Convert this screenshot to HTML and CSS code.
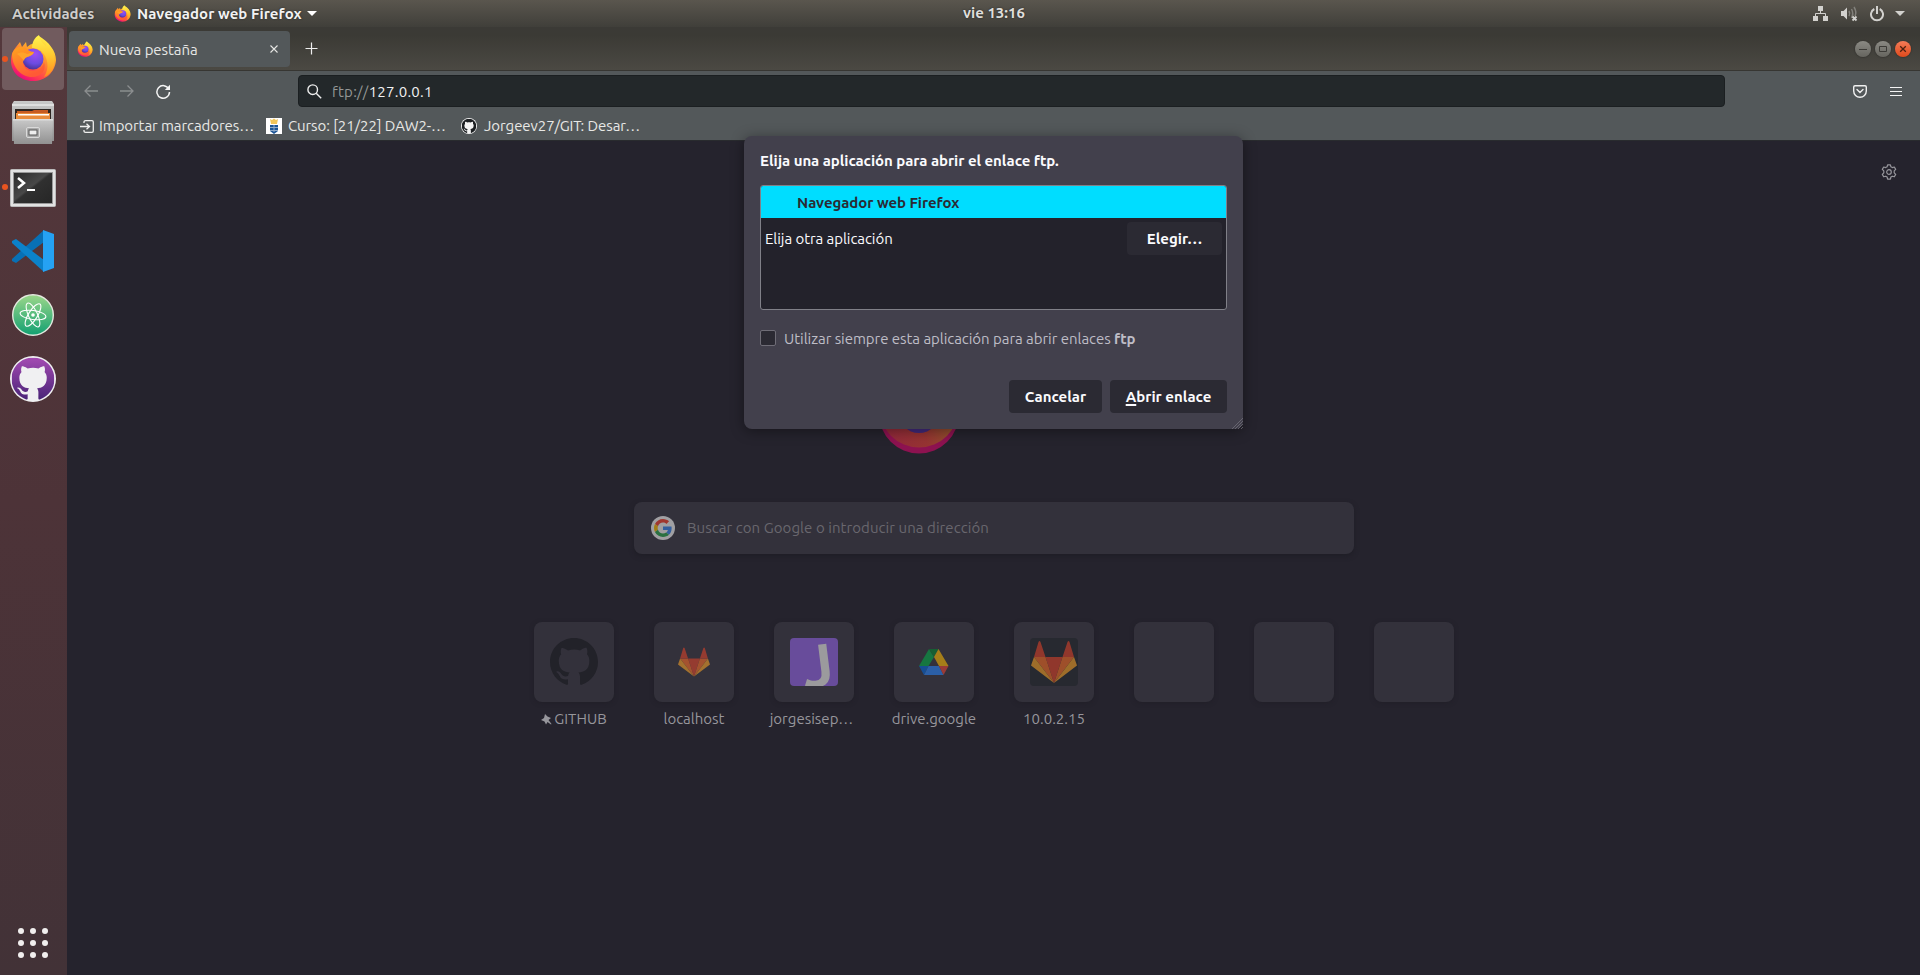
FILE: index.html
```html
<!DOCTYPE html>
<html lang="es">
<head>
<meta charset="utf-8">
<title>Nueva pestaña</title>
<link rel="stylesheet" href="styles.css">
</head>
<body>
<svg class="defs" width="0" height="0" aria-hidden="true">
  <defs>
    <linearGradient id="ffBody" x1=".85" y1=".1" x2=".3" y2="1"><stop offset="0" stop-color="#fff34a"/><stop offset=".28" stop-color="#ffb428"/><stop offset=".55" stop-color="#ff7139"/><stop offset=".8" stop-color="#ff3b50"/><stop offset="1" stop-color="#e9087e"/></linearGradient>
    <linearGradient id="ffTail" x1=".6" y1="0" x2=".6" y2="1"><stop offset="0" stop-color="#fff44f"/><stop offset=".5" stop-color="#ffc830"/><stop offset="1" stop-color="#ff8a1e"/></linearGradient>
    <linearGradient id="ffHead" x1="0" y1="0" x2=".4" y2="1"><stop offset="0" stop-color="#ffa51e"/><stop offset="1" stop-color="#ff5a36"/></linearGradient>
    <radialGradient id="ffGlobe" cx=".6" cy=".25" r=".8"><stop offset="0" stop-color="#a04df5"/><stop offset=".6" stop-color="#6b4be0"/><stop offset="1" stop-color="#45308f"/></radialGradient>
    <linearGradient id="ffDim" x1="0" y1=".8" x2="1" y2=".6"><stop offset="0" stop-color="#92283c"/><stop offset=".55" stop-color="#963432"/><stop offset="1" stop-color="#8f5a2a"/></linearGradient>
    <linearGradient id="metal" x1="0" y1="0" x2="0" y2="1"><stop offset="0" stop-color="#c9c9c9"/><stop offset="1" stop-color="#919191"/></linearGradient>
    <linearGradient id="screen" x1="0" y1="0" x2="1" y2="1"><stop offset="0" stop-color="#2a2a2a"/><stop offset=".45" stop-color="#484848"/><stop offset=".5" stop-color="#303030"/><stop offset="1" stop-color="#262626"/></linearGradient>
    <linearGradient id="atomBg" x1="0" y1="0" x2="0" y2="1"><stop offset="0" stop-color="#9bd78a"/><stop offset="1" stop-color="#12a071"/></linearGradient>
    <linearGradient id="ghBg" x1="0" y1="0" x2="0" y2="1"><stop offset="0" stop-color="#a44bb3"/><stop offset="1" stop-color="#4a2478"/></linearGradient>
    <symbol id="firefox" viewBox="0 0 46 48">
      <path fill="url(#ffBody)" d="M6 13 10 8l2 5 4-5 1 5c3-3 6-4 9-3L29 2c10 6 17 15 17 24C45 39 35 47 23 47 10 47 1 38 1 27 1 20 3 17 6 13z"/>
      <path fill="url(#ffTail)" d="M22 14c0-6 3-11 7-13 1 5 3 8 7 11l1-3c5 6 9 13 7 22-1 6-5 10-10 12 6-9 4-20-3-26-3-2-6-3-9-3z"/>
      <circle cx="23" cy="25" r="10.500" fill="url(#ffGlobe)"/>
      <path fill="url(#ffHead)" d="M2 20c2-5 5-7 8-7 4 0 6 1 8 3 2 1 4 2 6 2-1 3-4 4-7 5-3 1-4 3-4 6 1 5 5 8 10 8 6 0 10-4 11-9 3 8-3 15-12 15C11 43 2 33 2 20z"/>
      <path fill="#ffa329" d="M7 20c3-2 7-2 10 0l7-2c-1 3-4 4-7 5-2 1-3 2-3 4-2-3-4-5-7-7z"/>
    </symbol>
    <symbol id="github" viewBox="0 0 16 16"><path d="M8 0C3.580 0 0 3.580 0 8c0 3.540 2.290 6.530 5.470 7.590.4.070.55-.17.55-.38 0-.19-.01-.82-.01-1.490-2.010.37-2.530-.49-2.690-.94-.09-.23-.48-.94-.82-1.130-.28-.15-.68-.52-.01-.53.63-.01 1.080.58 1.230.82.72 1.210 1.870.87 2.330.66.070-.52.28-.87.51-1.070-1.780-.2-3.640-.89-3.640-3.950 0-.87.31-1.590.82-2.150-.08-.2-.36-1.020.080-2.120 0 0 .67-.21 2.200.82.64-.18 1.320-.27 2-.27.68 0 1.360.090 2 .27 1.530-1.040 2.200-.82 2.200-.82.44 1.100.16 1.920.080 2.120.51.56.82 1.270.82 2.150 0 3.070-1.870 3.750-3.650 3.950.29.25.54.73.54 1.480 0 1.070-.01 1.930-.01 2.200 0 .21.15.46.55.38A8.013 8.013 0 0 0 16 8c0-4.420-3.580-8-8-8z"/></symbol>
    <symbol id="gitlab" viewBox="0 0 46 42">
      <path fill="#e24329" d="M23 42 31.500 16h-17z"/>
      <path fill="#fc6d26" d="M23 42 14.500 16H3zM23 42l8.500-26H43z"/>
      <path fill="#fca326" d="M3 16 0 24.500 23 42zM43 16l3 8.500L23 42z"/>
      <path fill="#e24329" d="M3 16h11.500L9.500 1q-1-2-2 0zM43 16H31.500l5-15q1-2 2 0z"/>
    </symbol>
  </defs>
</svg>

<header class="topbar">
  <span class="activities">Actividades</span>
  <div class="appmenu">
    <svg width="17" height="17"><use href="#firefox"/></svg>
    <span class="appname">Navegador web Firefox</span>
    <svg class="caret" width="10" height="5"><path d="M0 0h10L5 5z" fill="#fff"/></svg>
  </div>
  <span class="clock">vie 13:16</span>
  <div class="tray">
    <svg width="15" height="15" fill="#d2d1ce"><path d="M5 0h5v5H5zM0 10h5v5H0zM10 10h5v5h-5z"/><path d="M7.500 5v3M2.500 10V7.500h10V10" fill="none" stroke="#d2d1ce"/></svg>
    <svg width="17" height="16" fill="#d2d1ce"><path d="M0 5h2.500L6 1.500v12L2.500 10H0z"/><path d="M8 5q1.500 2.500 0 5M10.500 3q2.500 4.500 0 9M13 1q3 5 1 9" fill="none" stroke="#82807b" stroke-width="1.500"/><path d="m11.500 10.500 4 4m0-4-4 4" stroke="#d2d1ce" stroke-width="1.800"/></svg>
    <svg width="14" height="16" fill="none" stroke="#d2d1ce" stroke-width="2"><path d="M4.300 3a6 6 0 1 0 5.400 0M7 0v8"/></svg>
    <svg width="10" height="5"><path d="M0 0h10L5 5z" fill="#d2d1ce"/></svg>
  </div>
</header>

<div class="desktop">
  <nav class="dock">
    <div class="dock-item active running"><svg width="46" height="48"><use href="#firefox"/></svg></div>
    <div class="dock-item">
      <svg width="42" height="44" viewBox="0 0 42 44"><path d="M0 3 2 0h38l2 3v37H0z" fill="url(#metal)"/><path d="M0 3h42v2H0z" fill="#dedede"/><path d="M3 8h36v11H3z" fill="#2c2521"/><path d="M5 10h15l2-1h14v3H5z" fill="#c75b21"/><path d="M4 12h34v6H4z" fill="#e98b3a"/><path d="M6 13h31v1.500H6z" fill="#fff"/><path d="M1 18h40l-1 25H2z" fill="url(#metal)"/><path d="M1 18h40v1.500H1z" fill="#dcdcdc"/><rect x="14.500" y="26.500" width="13" height="10" rx="1.500" fill="#aaa" stroke="#dadada"/><rect x="17" y="29" width="8" height="5" fill="#eee" stroke="#555"/></svg>
    </div>
    <div class="dock-item running">
      <svg class="term" width="46" height="38" viewBox="0 0 46 38"><rect x=".5" y=".5" width="45" height="37" rx="1" fill="#e2e2e2" stroke="#bbb"/><path d="M3 3h40v32H3z" fill="#999"/><path d="M4 4h38v30H4z" fill="url(#screen)"/><path d="m8 9 6 5-6 5" fill="none" stroke="#fff" stroke-width="2.500"/><path d="M17 20h8v2h-8z" fill="#fff"/></svg>
    </div>
    <div class="dock-item">
      <svg width="42" height="42" viewBox="0 0 42 42"><path fill="#0870b5" d="M0 29v2l4 2L32 12V0z"/><path fill="#0b82ca" d="M0 13v-2l4-2 28 21v12z"/><path fill="#25a2f3" d="m31 0 11 4v34l-11 4z"/></svg>
    </div>
    <div class="dock-item">
      <svg width="42" height="42" viewBox="0 0 42 42"><circle cx="21" cy="21" r="20.300" fill="url(#atomBg)" stroke="#e4e8df" stroke-width="1.400"/><g fill="none" stroke="#fff" stroke-width="1.100"><ellipse cx="21" cy="21" rx="13" ry="4.500" transform="rotate(8 21 21)"/><ellipse cx="21" cy="21" rx="13" ry="4.500" transform="rotate(65 21 21)"/><ellipse cx="21" cy="21" rx="13" ry="4.500" transform="rotate(122 21 21)"/></g><circle cx="21" cy="21" r="1.800" fill="#fff"/></svg>
    </div>
    <div class="dock-item">
      <svg width="46" height="46" viewBox="0 0 46 46"><circle cx="23" cy="23" r="23" fill="#f0f0f2"/><svg x="1.500" y="1.500" width="43" height="43" fill="url(#ghBg)"><use href="#github"/></svg></svg>
    </div>
    <svg class="apps" width="30" height="30" fill="#f1efee"><circle cx="3" cy="3" r="3"/><circle cx="15" cy="3" r="3"/><circle cx="27" cy="3" r="3"/><circle cx="3" cy="15" r="3"/><circle cx="15" cy="15" r="3"/><circle cx="27" cy="15" r="3"/><circle cx="3" cy="27" r="3"/><circle cx="15" cy="27" r="3"/><circle cx="27" cy="27" r="3"/></svg>
  </nav>

  <main class="browser">
    <div class="tabs">
      <div class="tab">
        <svg width="16" height="16"><use href="#firefox"/></svg>
        <span class="tab-title">Nueva pestaña</span>
        <svg class="tab-close" width="8" height="8" stroke="#e6e6e4" stroke-width="1.100"><path d="m.5.5 7 7m0-7-7 7"/></svg>
      </div>
      <svg class="newtab" width="13" height="13" stroke="#eee" stroke-width="1.200"><path d="M6.500.5v12M.5 6.500h12"/></svg>
      <div class="winbtns">
        <span class="wb"><svg width="16" height="16" stroke="#3c3b37"><path d="M4 8.500h8"/></svg></span>
        <span class="wb"><svg width="16" height="16" fill="none" stroke="#3c3b37"><path d="M4.500 5.500h7v5h-7z"/></svg></span>
        <span class="wb close"><svg width="16" height="16" stroke="#4c2010" stroke-width="1.300"><path d="m5.200 5.200 5.600 5.600m0-5.600-5.600 5.600"/></svg></span>
      </div>
    </div>

    <div class="toolbar">
      <svg width="14" height="12" class="nav-off"><path d="M14 6H1M6.500.5 1 6l5.500 5.500"/></svg>
      <svg width="14" height="12" class="nav-off"><path d="M0 6h13M7.500.5 13 6l-5.500 5.500"/></svg>
      <svg width="15" height="15" fill="none" stroke="#f4f4f4" stroke-width="1.500"><path d="M12.800 5A6.300 6.300 0 1 0 13.500 8"/><path d="M14 .8V6H8.800z" fill="#f4f4f4" stroke="none"/></svg>
      <div class="urlbar">
        <svg width="15" height="15" fill="none" stroke="#eee" stroke-width="1.400"><circle cx="5.700" cy="5.700" r="4.800"/><path d="m9.200 9.200 5 5"/></svg>
        <span class="url"><span class="scheme">ftp://</span>127.0.0.1</span>
      </div>
      <svg class="pocket" width="14" height="13" fill="none" stroke="#f0f0f0" stroke-width="1.400"><path d="M2 .7h10q1.300 0 1.300 1.300v4a6.300 6.300 0 0 1-12.600 0V2Q.7.700 2 .7z"/><path d="M4 4.500 7 7.500l3-3" stroke-linecap="round"/></svg>
      <svg class="menu" width="12" height="11" stroke="#f4f4f4"><path d="M0 1.500h12M0 5.500h12M0 9.500h12"/></svg>
    </div>

    <div class="bookmarks">
      <div class="bm"><svg width="14" height="13" fill="none" stroke="#eee" stroke-width="1.300"><path d="M4 3V2Q4 .7 5.500.7h6.500q1.300 0 1.300 1.300v9q0 1.300-1.300 1.300H5.500Q4 12.300 4 11v-1M0 6.500h9M6.500 3.800l3 2.700-3 2.700"/></svg><span>Importar marcadores…</span></div>
      <div class="bm"><svg width="16" height="16"><path fill="#fff" d="M0 0h16v16H0z"/><path fill="#f2c65a" d="m4 1 2 1 2-1.500L10 2l2-1-1 5H5z"/><path fill="#1c5596" d="M4 7h8v6l-4 3-4-3z"/><path stroke="#fff" d="M4 9.500h8M4 12.500h8M8 7v7" opacity=".5"/></svg><span>Curso: [21/22] DAW2-…</span></div>
      <div class="bm"><svg width="16" height="16" viewBox="0 0 16 16"><circle cx="8" cy="8" r="8" fill="#f4f4f4"/><svg x=".7" y=".7" width="14.600" height="14.600" fill="#1c1f22"><use href="#github"/></svg></svg><span>Jorgeev27/GIT: Desar…</span></div>
    </div>

    <section class="page">
      <svg class="gear" width="16" height="16" viewBox="0 0 16 16" fill="none" stroke="#97969c" stroke-width="1.200"><path d="M6.600.8h2.800l.5 2 1.400.8 2-.6 1.400 2.400-1.500 1.500v1.900l1.500 1.600-1.400 2.400-2-.6-1.400.8-.5 2.200H6.600l-.5-2.200-1.400-.8-2 .6-1.400-2.400 1.500-1.600V6.900L1.300 5.400 2.700 3l2 .6 1.400-.8z" stroke-linejoin="round"/><circle cx="8" cy="8" r="2.300"/></svg>
      <svg class="logo" width="80" height="83" viewBox="0 0 80 83"><circle cx="40" cy="42.500" r="40" fill="#8d1250"/><circle cx="40" cy="37" r="39.500" fill="url(#ffDim)"/><circle cx="40" cy="41" r="21" fill="#41297b"/></svg>
      <div class="search">
        <svg width="24" height="24" viewBox="0 0 24 24"><circle cx="12" cy="12" r="12" fill="#a09fa2"/><svg x="3" y="3" width="18" height="18" viewBox="0 0 48 48"><path fill="#a0372f" d="M24 9.500c3.540 0 6.710 1.220 9.210 3.600l6.850-6.850C35.900 2.380 30.470 0 24 0 14.620 0 6.510 5.380 2.560 13.220l7.980 6.190C12.430 13.720 17.740 9.500 24 9.500z"/><path fill="#335f9f" d="M46.980 24.550c0-1.570-.15-3.090-.38-4.550H24v9.020h12.940c-.58 2.960-2.260 5.480-4.780 7.180l7.730 6c4.510-4.180 7.090-10.360 7.090-17.650z"/><path fill="#a37c13" d="M10.530 28.590c-.48-1.450-.76-2.990-.76-4.590s.27-3.140.76-4.590l-7.980-6.190C.92 16.460 0 20.120 0 24c0 3.880.92 7.540 2.560 10.780l7.970-6.190z"/><path fill="#2a7040" d="M24 48c6.480 0 11.930-2.130 15.890-5.810l-7.730-6c-2.150 1.450-4.920 2.300-8.160 2.300-6.260 0-11.570-4.220-13.470-9.910l-7.980 6.190C6.510 42.620 14.620 48 24 48z"/></svg></svg>
        <span>Buscar con Google o introducir una dirección</span>
      </div>
      <div class="tiles">
        <div class="site"><div class="tile"><svg width="48" height="48" fill="#222229"><use href="#github"/></svg></div><div class="label"><svg width="11" height="11" viewBox="0 0 11 11" fill="#97969c"><path d="m4 0 2.500 2.500L10 4 7.500 6 10.500 10l-.5.500L6.500 8 5 10.500 3.500 7.500 0 6l3-2z"/></svg><span>GITHUB</span></div></div>
        <div class="site"><div class="tile"><svg class="dim" width="32" height="30"><use href="#gitlab"/></svg></div><div class="label"><span>localhost</span></div></div>
        <div class="site"><div class="tile"><svg class="jot" width="48" height="48"><text x="12" y="49" transform="rotate(-7 24 28)">J</text></svg></div><div class="label wide"><span>jorgesisep…</span></div></div>
        <div class="site"><div class="tile"><svg class="dim" width="30" height="26" viewBox="0 0 30 26"><path fill="#00ac47" d="M10 0 0 17h9.500L15 8z"/><path fill="#00832d" d="M10 0h9.500L15 8z"/><path fill="#ffba00" d="m19.500 0 10 17H20L15 8z"/><path fill="#0066da" d="M0 17h9.500L5 26z"/><path fill="#2684fc" d="M9.500 17H20l4.500 9H5z"/><path fill="#ea4335" d="M20 17h9.500l-5 9z"/></svg></div><div class="label"><span>drive.google</span></div></div>
        <div class="site"><div class="tile"><span class="gl-big"><svg class="dim" width="46" height="42"><use href="#gitlab"/></svg></span></div><div class="label"><span>10.0.2.15</span></div></div>
        <div class="site"><div class="tile"></div></div>
        <div class="site"><div class="tile"></div></div>
        <div class="site"><div class="tile"></div></div>
      </div>
    </section>
  </main>
</div>

<div class="dialog" role="dialog">
  <div class="title">Elija una aplicación para abrir el enlace ftp.</div>
  <div class="list">
    <div class="row selected"><span>Navegador web Firefox</span></div>
    <div class="row"><span class="other">Elija otra aplicación</span><span class="btn choose">Elegir…</span></div>
  </div>
  <div class="remember"><span class="check"></span><span class="remember-text">Utilizar siempre esta aplicación para abrir enlaces <b>ftp</b></span></div>
  <div class="actions">
    <span class="btn cancel">Cancelar</span>
    <span class="btn open"><span><span class="key">A</span>brir enlace</span></span>
  </div>
  <svg class="grip" width="11" height="11" stroke="#77757f" stroke-width=".7"><path d="M0 11 11 0M3 11l8-8M6 11l5-5M9 11l2-2"/></svg>
</div>
</body>
</html>
```
FILE: styles.css
```css
* { box-sizing: border-box; }
body {
  margin: 0;
  width: 1920px;
  height: 975px;
  overflow: hidden;
  display: flex;
  flex-direction: column;
  position: relative;
  font: 15px/20px Ubuntu, "Noto Sans", "Open Sans", sans-serif;
  color: #f2f2f2;
  background: #25232d;
  white-space: nowrap;
}
svg { display: block; flex: none; }
.defs { position: absolute; }

.topbar {
  height: 27px;
  flex: none;
  display: flex;
  align-items: center;
  background: linear-gradient(#5a564e, #403f3a);
  font-weight: 700;
  text-shadow: 0 0 2px #222;
  padding-left: 12px;
}
.activities { width: 102px; color: #cfcecb; }
.appmenu { display: flex; align-items: center; width: 849px; }
.appname { width: 176px; padding-left: 6px; letter-spacing: .06px; }
.clock { width: 850px; color: #dfdedb; padding-bottom: 1px; }
.tray { display: flex; align-items: center; gap: 13px; }
.tray svg:nth-child(3) { margin-left: -1px; }
.tray svg:last-child { margin-left: -2px; }

.desktop { flex: 1; display: flex; min-height: 0; }
.dock {
  width: 67px;
  flex: none;
  background: linear-gradient(#54383c, #4d3338 50%, #423237);
  display: flex;
  flex-direction: column;
  padding: 1px 3px 0 2px;
  gap: 2px;
}
.dock-item {
  height: 62px;
  display: flex;
  align-items: center;
  justify-content: center;
  border-radius: 4px;
  position: relative;
}
.active { background: #715b5e; }
.active svg { margin-top: -2px; }
.term { margin-top: 2px; }
.running::before {
  content: "";
  position: absolute;
  left: 0;
  top: 28px;
  width: 6px;
  height: 6px;
  border-radius: 3px;
  background: #e95420;
}
.apps { margin: auto 0 17px 16px; }

.browser { flex: 1; display: flex; flex-direction: column; min-width: 0; }
.tabs {
  height: 44px;
  flex: none;
  display: flex;
  align-items: center;
  background: linear-gradient(#3b3a36, #3b3a35 20%, #4b4943);
  border-bottom: 1px solid #373632;
  padding: 0 9px 0 2px;
}
.tab {
  width: 221px;
  height: 36px;
  border-radius: 4px;
  background: #53585a;
  display: flex;
  align-items: center;
  padding: 0 12px 0 8px;
}
.tab-title { margin-left: 6px; padding-top: 2px; color: #e6e6e4; letter-spacing: -.06px; }
.tab-close { margin-left: auto; }
.newtab { margin-left: 15px; }
.winbtns { margin-left: auto; display: flex; gap: 4px; }
.wb { width: 16px; height: 16px; border-radius: 8px; background: linear-gradient(#8b8a84, #66655f); box-shadow: 0 0 1px 1px #393834; }
.wb.close { background: linear-gradient(#f47b57, #df4a1c); }

.toolbar {
  height: 40px;
  flex: none;
  display: flex;
  align-items: center;
  background: #53585a;
  padding-left: 17px;
  gap: 22px;
}
.nav-off { fill: none; stroke: #8b8e8f; stroke-width: 1.3; }
.urlbar {
  width: 1427px;
  height: 32px;
  margin-left: 105px;
  border: 1px solid #1b1f21;
  border-radius: 4px;
  background: #23282a;
  display: flex;
  align-items: center;
  padding-left: 8px;
  gap: 10px;
}
.url { padding-top: 1px; letter-spacing: .25px; }
.scheme { color: #949796; }
.pocket { margin-left: 106px; }
.menu { margin-left: 1px; }
.bookmarks {
  height: 30px;
  flex: none;
  display: flex;
  align-items: center;
  background: #53585a;
  border-bottom: 1px solid #292b2e;
  padding: 1px 0 0 13px;
}
.bm { display: flex; align-items: center; gap: 6px; color: #e8e8e6; width: 195px; letter-spacing: -.08px; }
.bm:first-child { width: 186px; gap: 5px; }
.bm:last-child { gap: 7px; }

.page { flex: 1; position: relative; background: #25232d; padding: 0 319px 0 467px; }
.gear { position: absolute; right: 23px; top: 23px; }
.logo { position: absolute; left: 812px; top: 230px; }
.search {
  width: 720px;
  height: 52px;
  margin: 361px 0 68px 100px;
  border-radius: 8px;
  background: #33313b;
  box-shadow: 0 2px 5px #1f1e26;
  display: flex;
  align-items: center;
  padding-left: 17px;
  gap: 12px;
  color: #69676e;
  letter-spacing: .06px;
}
.tiles { display: flex; gap: 40px; }
.site { width: 80px; display: flex; flex-direction: column; align-items: center; }
.tile {
  width: 80px;
  height: 80px;
  border-radius: 8px;
  background: #33313b;
  box-shadow: 0 1px 4px #211f28;
  display: flex;
  align-items: center;
  justify-content: center;
}
.label { height: 34px; display: flex; align-items: center; gap: 2px; color: #97969c; }
.wide { margin-right: 5px; }
.dim { opacity: .56; }
.jot { background: #684c9b; border-radius: 4px; overflow: hidden; }
.jot text { font: 700 60px Ubuntu, "Noto Sans", sans-serif; fill: #9b9a9d; }
.gl-big { width: 48px; height: 48px; border-radius: 4px; background: #272930; display: flex; align-items: center; justify-content: center; }

.dialog {
  position: absolute;
  left: 744px;
  top: 136px;
  width: 499px;
  height: 293px;
  border-radius: 8px;
  background: #42404c;
  box-shadow: 0 2px 14px rgba(0, 0, 0, .4);
  padding: 15px 16px 16px;
  color: #fbfbfe;
}
.title { font-weight: 700; height: 34px; line-height: 20px; letter-spacing: -.04px; }
.list {
  height: 125px;
  border: 1px solid #808088;
  border-radius: 3px;
  background: #23222b;
  overflow: hidden;
}
.row { display: flex; align-items: center; justify-content: space-between; height: 40px; padding: 0 4px; }
.row.selected { height: 32px; background: #00ddff; color: #2b2a33; font-weight: 700; padding: 2px 4px 0 36px; letter-spacing: -.05px; }
.other { padding-top: 2px; letter-spacing: -.06px; }
.btn {
  height: 33px;
  border-radius: 4px;
  background: #2b2a33;
  font-weight: 700;
  display: flex;
  align-items: center;
  justify-content: center;
}
.choose { width: 95px; padding-top: 1px; }
.remember { display: flex; align-items: center; gap: 8px; height: 20px; margin-top: 18px; color: #bebdc6; }
.remember-text { padding-top: 2px; letter-spacing: -.045px; }
.check { width: 16px; height: 16px; border: 1px solid #6f6d77; border-radius: 2px; background: #2b2a33; }
.actions { display: flex; justify-content: flex-end; gap: 8px; margin-top: 32px; }
.cancel { width: 93px; }
.open { width: 117px; }
.key { text-decoration: underline; text-decoration-thickness: 2px; text-underline-offset: 2px; }
.grip { position: absolute; right: 0; bottom: 0; }
```
